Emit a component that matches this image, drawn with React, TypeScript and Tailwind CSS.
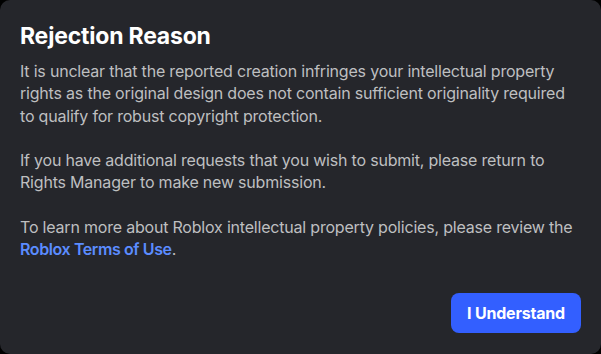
export default function App() {
  return (
    <div className="w-[601px] h-[354px] bg-black">
      <div
        className="w-full h-full bg-[#25262b] rounded-[10px] px-5 pt-[21px] pb-[21px] flex flex-col"
        style={{ fontFamily: 'Inter, "Noto Sans", sans-serif' }}
      >
        <h1 className="text-[23px] font-bold text-white leading-[30px] tracking-[-0.2px]">
          Rejection Reason
        </h1>
        <p className="mt-[9px] text-[16px] leading-[22.3px] tracking-[-0.2px] text-[#bebfc0]">
          It is unclear that the reported creation infringes your intellectual property rights as
          the original design does not contain sufficient originality required to qualify for
          robust copyright protection.
          <br />
          <br />
          If you have additional requests that you wish to submit, please return to Rights Manager
          to make new submission.
          <br />
          <br />
          To learn more about Roblox intellectual property policies, please review the{' '}
          <a className="font-semibold tracking-[-0.4px] text-[#5b8cff]">Roblox Terms of Use</a>.
        </p>
        <div className="mt-auto flex justify-end">
          <button className="w-[130px] h-10 rounded-lg bg-[#335fff] text-white font-bold text-[16px] tracking-[-0.2px]">
            I Understand
          </button>
        </div>
      </div>
    </div>
  );
}
